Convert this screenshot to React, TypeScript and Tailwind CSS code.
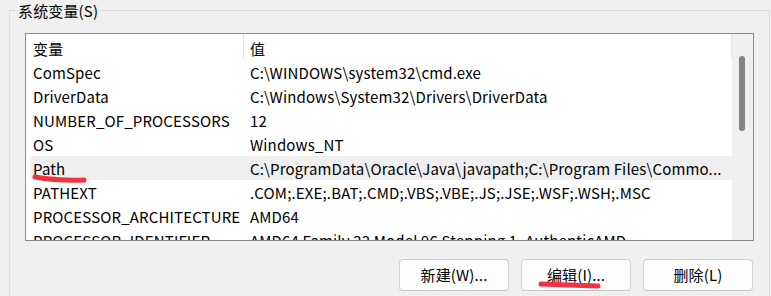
const rows: [string, string][] = [
  ["ComSpec", "C:\\WINDOWS\\system32\\cmd.exe"],
  ["DriverData", "C:\\Windows\\System32\\Drivers\\DriverData"],
  ["NUMBER_OF_PROCESSORS", "12"],
  ["OS", "Windows_NT"],
  ["Path", "C:\\ProgramData\\Oracle\\Java\\javapath;C:\\Program Files\\Commo..."],
  ["PATHEXT", ".COM;.EXE;.BAT;.CMD;.VBS;.VBE;.JS;.JSE;.WSF;.WSH;.MSC"],
  ["PROCESSOR_ARCHITECTURE", "AMD64"],
  ["PROCESSOR_IDENTIFIER", "AMD64 Family 23 Model 96 Stepping 1, AuthenticAMD"],
];

function Button({ label }: { label: string }) {
  return (
    <button className="flex h-[32px] w-[110px] items-center justify-center rounded-[4px] border border-[#d1d1d1] border-b-[#c3c3c3] bg-[#fdfdfd] pt-[1px] text-[15px] text-black">
      {label}
    </button>
  );
}

export default function App() {
  return (
    <div className="relative h-[296px] w-[771px] overflow-hidden bg-[#f0f0f0] font-['Noto_Sans_CJK_SC',sans-serif] text-[15px] tracking-[0.15px] text-black">
      <fieldset className="ml-[9px] w-[761px] border border-[#dcdcdc] px-0 pb-[40px] pt-[12px]">
        <legend className="ml-[6px] px-[2px] pt-[1px] leading-[20px]">系统变量(S)</legend>

        {/* list view */}
        <div className="mx-[15px] flex h-[208px] border border-[#868a91] bg-white">
          <div className="flex-1 overflow-hidden">
            <div className="ml-[5px] flex h-[26px]">
              <div className="h-[25px] w-[213px] border-r border-[#e5e5e5] pl-[2px] pt-[3px] leading-[24px]">变量</div>
              <div className="h-[25px] flex-1 border-r border-[#e5e5e5] pl-[6px] pt-[3px] leading-[24px]">值</div>
            </div>
            {rows.map(([name, value]) => (
              <div
                key={name}
                className={
                  name === "Path"
                    ? "ml-[5px] flex h-[24px] bg-[#efefef] leading-[26px]"
                    : "ml-[5px] flex h-[24px] leading-[26px]"
                }
              >
                <div className="w-[217px] shrink-0 whitespace-nowrap pl-[2px]">{name}</div>
                <div className="flex-1 overflow-hidden whitespace-nowrap pl-[2px]">{value}</div>
              </div>
            ))}
          </div>
          <div className="w-[21px] shrink-0 bg-[#f0f0f0] pl-[7px] pt-[22px]">
            <div className="h-[75px] w-[6px] rounded-[3px] bg-[#858585]" />
          </div>
        </div>

        <div className="mr-[16px] mt-[18px] flex justify-end gap-[12px]">
          <Button label="新建(W)..." />
          <Button label="编辑(I)..." />
          <Button label="删除(L)" />
        </div>
      </fieldset>

      {/* red marker strokes */}
      <svg className="pointer-events-none absolute inset-0" width="771" height="296">
        <path d="M35 177 Q 58 181 84 180" stroke="#ef3340" strokeWidth="5" strokeLinecap="round" fill="none" />
        <path d="M541 284 Q 570 285 598 286" stroke="#ef3340" strokeWidth="5" strokeLinecap="round" fill="none" />
      </svg>
    </div>
  );
}
